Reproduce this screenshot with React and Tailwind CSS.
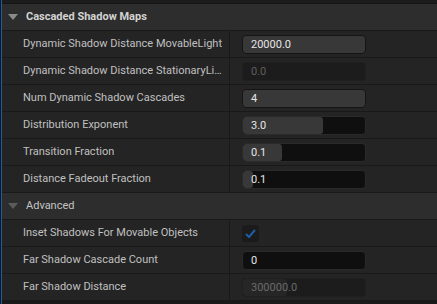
import React from 'react';

const rows1 = [
  { label: 'Dynamic Shadow Distance MovableLight', value: '20000.0', kind: 'text' },
  { label: 'Dynamic Shadow Distance StationaryLight', value: '0.0', kind: 'disabled' },
  { label: 'Num Dynamic Shadow Cascades', value: '4', kind: 'text' },
  { label: 'Distribution Exponent', value: '3.0', kind: 'slider', fill: 80 },
  { label: 'Transition Fraction', value: '0.1', kind: 'slider', fill: 39 },
  { label: 'Distance Fadeout Fraction', value: '0.1', kind: 'slider', fill: 10 },
];

const rows2 = [
  { label: 'Inset Shadows For Movable Objects', kind: 'check' },
  { label: 'Far Shadow Cascade Count', value: '0', kind: 'dark' },
  { label: 'Far Shadow Distance', value: '300000.0', kind: 'disabledSlider', fill: 44 },
];

function Caret({ light }) {
  return (
    <svg width="10" height="6" viewBox="0 0 10 6" className="mr-[8px]">
      <path d="M0 0 L10 0 L5 6 Z" fill={light ? '#8a8a8a' : '#5c5c5c'} />
    </svg>
  );
}

function Header({ title, bold, light }) {
  return (
    <div className="flex items-center h-[27px] border-b border-[#191919] bg-[#2d2d2d] pl-[6px]">
      <Caret light={light} />
      <span className={`text-[11px] ${bold ? 'font-bold text-[#d2d2d2]' : 'text-[#c4c4c4]'}`}>{title}</span>
    </div>
  );
}

function Value({ row }) {
  if (row.kind === 'check') {
    return (
      <div className="w-[17px] h-[17px] rounded-[3px] bg-[#1b1b1b] flex items-center justify-center">
        <svg width="11" height="9" viewBox="0 0 11 9">
          <path d="M1 5 L4 8 L10 1" stroke="#1d5fa5" strokeWidth="2" fill="none" />
        </svg>
      </div>
    );
  }
  let box = 'bg-[#383838] border-[#151515] text-[#e6e6e6]';
  if (row.kind === 'disabled') box = 'bg-[#1c1c1c] border-[#1f1f1f] text-[#5e5e5e]';
  if (row.kind === 'slider' || row.kind === 'dark') box = 'bg-[#0f0f0f] border-[#2a2a2a] text-[#e6e6e6]';
  if (row.kind === 'disabledSlider') box = 'bg-[#1c1c1c] border-[#1f1f1f] text-[#6a6a6a]';
  const fillColor = row.kind === 'disabledSlider' ? '#262626' : '#383838';
  return (
    <div className={`relative w-[124px] h-[19px] rounded-[4px] border overflow-hidden ${box}`}>
      {row.fill && (
        <div
          className="absolute left-0 top-0 bottom-0 rounded-[3px]"
          style={{ width: `${row.fill}px`, background: fillColor }}
        />
      )}
      <span className="relative block pl-[8px] text-[11px] leading-[17px]">{row.value}</span>
    </div>
  );
}

function Row({ row }) {
  return (
    <div className="flex h-[27px] border-b border-[#191919] bg-[#242424]">
      <div className="w-[228px] flex items-center pl-[21px] pr-[2px] border-r border-[#191919]">
        <span className="truncate text-[11px] text-[#c0c0c0]">{row.label}</span>
      </div>
      <div className="flex-1 flex items-center pl-[12px]">
        <Value row={row} />
      </div>
    </div>
  );
}

export default function App() {
  return (
    <div
      className="w-[437px] h-[304px] bg-[#1a1a1a] overflow-hidden flex"
      style={{ fontFamily: 'Roboto, "Noto Sans", sans-serif' }}
    >
      <div className="w-px bg-[#151515]" />
      <div className="flex-1 border-l border-[#1560a8] flex flex-col">
        <div className="h-[4px] bg-[#1c1c1c] border-b border-[#151515]" />
        <Header title="Cascaded Shadow Maps" bold light />
        {rows1.map((r) => <Row key={r.label} row={r} />)}
        <Header title="Advanced" />
        {rows2.map((r) => <Row key={r.label} row={r} />)}
      </div>
    </div>
  );
}
